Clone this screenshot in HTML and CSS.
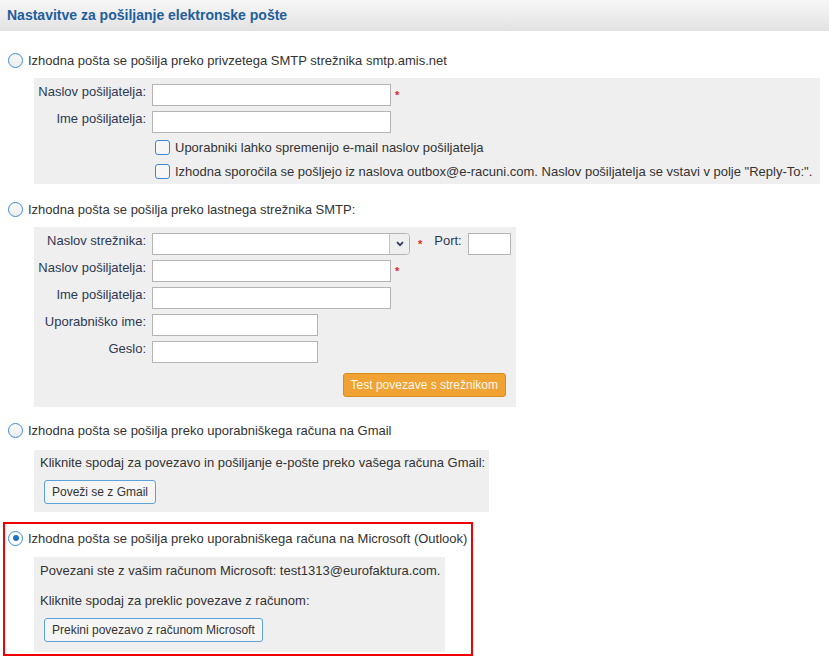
FILE: index.html
```html
<!DOCTYPE html>
<html lang="sl">
  <head>
    <meta charset="UTF-8" />
    <title>Nastavitve za pošiljanje elektronske pošte</title>
    <link rel="stylesheet" href="styles.css">
  </head>
  <body>
    <div class="head">
      <h1>Nastavitve za pošiljanje elektronske pošte</h1>
    </div>

    <!-- privzeti streznik -->
    <div class="option first">
      <label class="opt-row">
        <input type="radio" name="mode" />
        <span>Izhodna pošta se pošilja preko privzetega SMTP strežnika smtp.amis.net</span>
      </label>
      <div class="panel panel-default">
        <div class="field">
          <span class="lbl">Naslov pošiljatelja:</span>
          <input type="text" class="txt" />
          <span class="req">*</span>
        </div>
        <div class="field">
          <span class="lbl">Ime pošiljatelja:</span>
          <input type="text" class="txt" />
        </div>
        <label class="check">
          <input type="checkbox" />
          <span>Uporabniki lahko spremenijo e-mail naslov pošiljatelja</span>
        </label>
        <label class="check">
          <input type="checkbox" />
          <span>Izhodna sporočila se pošljejo iz naslova outbox@e-racuni.com. Naslov pošiljatelja se vstavi v polje "Reply-To:".</span>
        </label>
      </div>
    </div>

    <!-- lastni streznik -->
    <div class="option">
      <label class="opt-row">
        <input type="radio" name="mode" />
        <span>Izhodna pošta se pošilja preko lastnega strežnika SMTP:</span>
      </label>
      <div class="panel panel-own">
        <div class="field">
          <span class="lbl">Naslov strežnika:</span>
          <div class="select">
            <span class="select-val"></span>
            <span class="caret">
              <svg width="8" height="6" viewBox="0 0 8 6"><path d="M1 1.2 4 4.2 7 1.2" fill="none" stroke="#2d3a5c" stroke-width="1.8"/></svg>
            </span>
          </div>
          <span class="req req-wide">*</span>
          <span class="lbl-port">Port:</span>
          <input type="text" class="txt txt-port" />
        </div>
        <div class="field">
          <span class="lbl">Naslov pošiljatelja:</span>
          <input type="text" class="txt" />
          <span class="req">*</span>
        </div>
        <div class="field">
          <span class="lbl">Ime pošiljatelja:</span>
          <input type="text" class="txt" />
        </div>
        <div class="field">
          <span class="lbl">Uporabniško ime:</span>
          <input type="text" class="txt txt-short" />
        </div>
        <div class="field">
          <span class="lbl">Geslo:</span>
          <input type="password" class="txt txt-short" />
        </div>
        <div class="actions">
          <button class="btn-orange">Test povezave s strežnikom</button>
        </div>
      </div>
    </div>

    <!-- gmail -->
    <div class="option opt-gmail">
      <label class="opt-row">
        <input type="radio" name="mode" />
        <span>Izhodna pošta se pošilja preko uporabniškega računa na Gmail</span>
      </label>
      <div class="panel panel-gmail">
        <p>Kliknite spodaj za povezavo in pošiljanje e-pošte preko vašega računa Gmail:</p>
        <button class="btn">Poveži se z Gmail</button>
      </div>
    </div>

    <!-- microsoft -->
    <div class="option selected">
      <label class="opt-row">
        <input type="radio" name="mode" checked />
        <span>Izhodna pošta se pošilja preko uporabniškega računa na Microsoft (Outlook)</span>
      </label>
      <div class="panel panel-ms">
        <p>Povezani ste z vašim računom Microsoft: test1313@eurofaktura.com.</p>
        <p class="gap">Kliknite spodaj za preklic povezave z računom:</p>
        <button class="btn">Prekini povezavo z računom Microsoft</button>
      </div>
    </div>
  </body>
</html>
```

FILE: styles.css
```css
* {
  box-sizing: border-box;
}
html,
body {
  margin: 0;
  padding: 0;
  background: #fff;
  font-family: "Liberation Sans", Arial, sans-serif;
  font-size: 13px;
  line-height: 15px;
  color: #333;
}
p {
  margin: 0;
}
button {
  cursor: pointer;
  font-family: inherit;
  font-size: 12px;
}

/* naslovna vrstica */
.head {
  height: 31px;
  padding-left: 7px;
  background: linear-gradient(#f7f7f7, #e2e2e2);
}
.head h1 {
  margin: 0;
  font-size: 14px;
  line-height: 31px;
  color: #1f5e9c;
}

/* izbire */
.option {
  margin-top: 16px;
  padding-left: 8px;
}
.option.first {
  margin-top: 20px;
}
.option.opt-gmail {
  margin-top: 14px;
}
.option.selected {
  margin: 10px 0 0 3px;
  padding: 5px 0 2px 3px;
  width: 470px;
  border: 2px solid #f00000;
}
.opt-row {
  display: flex;
  align-items: center;
  gap: 5px;
  height: 18px;
}
.opt-row input {
  appearance: none;
  margin: 0;
  width: 15px;
  height: 15px;
  border: 1px solid #3b8dd6;
  border-radius: 50%;
  background: linear-gradient(#fafafa, #ececec);
  position: relative;
}
.opt-row input:checked {
  background: #fff;
}
.opt-row input:checked:after {
  content: '';
  position: absolute;
  left: 3.5px;
  top: 3.5px;
  width: 6px;
  height: 6px;
  border-radius: 50%;
  background: #1c74c9;
}

/* sivi okvirji */
.panel {
  margin: 9px 0 0 26px;
  background: #efefef;
}
.panel-default {
  width: 786px;
  padding: 6px 0 3px;
  display: flex;
  flex-direction: column;
  gap: 5px;
}
.panel-own {
  width: 482px;
  padding: 6px 0 10px 0;
  display: flex;
  flex-direction: column;
  gap: 5px;
}
.panel-gmail {
  margin-top: 11px;
  width: 455px;
  padding: 5px 0 8px 6px;
}
.panel-ms {
  margin-top: 10px;
  width: 411px;
  padding: 6px 0 10px 6px;
}
.panel-ms .gap {
  margin-top: 15px;
}

/* vrstice obrazca */
.field {
  display: flex;
  align-items: flex-start;
  height: 22px;
}
.field > * {
  flex-shrink: 0;
}
.lbl {
  width: 118px;
  padding-right: 6px;
  text-align: right;
  color: #2e3852;
}
.txt {
  margin: 0;
  width: 239px;
  height: 22px;
  border: 1px solid #b4b4b4;
  background: #fff;
  border-radius: 0;
}
.txt-short {
  width: 166px;
}
.txt-port {
  width: 43px;
}
.req {
  margin-left: 4px;
  font-size: 11px;
  font-weight: bold;
  line-height: 22px;
  color: #e8221b;
}
.req-wide {
  margin-left: 8px;
}
.lbl-port {
  margin: 0 6px 0 12px;
  color: #2e3852;
}

/* spustni seznam */
.select {
  display: flex;
  width: 258px;
  height: 22px;
  border: 1px solid #b4b4b4;
  border-radius: 0 4px 4px 0;
  background: #fff;
}
.select-val {
  flex: 1;
}
.caret {
  display: flex;
  justify-content: center;
  align-items: center;
  width: 20px;
  border-left: 1px solid #c4c4c4;
  background: #eef0f0;
  border-radius: 0 3px 3px 0;
}

/* potrditvena polja */
.check {
  display: flex;
  align-items: center;
  gap: 5px;
  height: 19px;
  padding-left: 121px;
}
.check input {
  appearance: none;
  margin: 0;
  width: 15px;
  height: 15px;
  border: 1px solid #3b86d2;
  border-radius: 3px;
  background: #f6f6f6;
}

/* gumbi */
.actions {
  display: flex;
  justify-content: flex-end;
  margin: 5px 10px 0 0;
}
.btn-orange {
  height: 24px;
  padding: 0 7px;
  color: #fdf8ee;
  background: #f0a232;
  border: 1px solid #d88c1e;
  border-radius: 3px;
}
.btn {
  display: block;
  margin: 10px 0 0 4px;
  height: 24px;
  padding: 0 7px;
  color: #333;
  background: #f5f5f5;
  border: 1px solid #5da2da;
  border-radius: 3px;
}
```
